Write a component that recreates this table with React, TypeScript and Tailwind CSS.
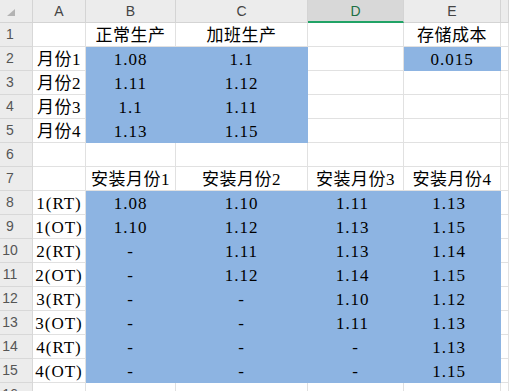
import React from "react";

const COLS = ["A", "B", "C", "D", "E", ""];
const BLUE = "bg-[#8db4e2] border-[#8db4e2]";

type Cell = { v?: string; blue?: boolean; num?: boolean; shift?: boolean };

const rows: Cell[][] = [
  [{}, { v: "正常生产" }, { v: "加班生产" }, {}, { v: "存储成本" }],
  [{ v: "月份1" }, { v: "1.08", blue: true, num: true }, { v: "1.1", blue: true, num: true }, {}, { v: "0.015", blue: true, num: true }],
  [{ v: "月份2" }, { v: "1.11", blue: true, num: true }, { v: "1.12", blue: true, num: true }, {}, {}],
  [{ v: "月份3" }, { v: "1.1", blue: true, num: true }, { v: "1.11", blue: true, num: true }, {}, {}],
  [{ v: "月份4" }, { v: "1.13", blue: true, num: true }, { v: "1.15", blue: true, num: true }, {}, {}],
  [{}, {}, {}, {}, {}],
  [{}, { v: "安装月份1" }, { v: "安装月份2" }, { v: "安装月份3" }, { v: "安装月份4" }],
];

// install rows: label + B..E values
const install: [string, string[]][] = [
  ["1(RT)", ["1.08", "1.10", "1.11", "1.13"]],
  ["1(OT)", ["1.10", "1.12", "1.13", "1.15"]],
  ["2(RT)", ["-", "1.11", "1.13", "1.14"]],
  ["2(OT)", ["-", "1.12", "1.14", "1.15"]],
  ["3(RT)", ["-", "-", "1.10", "1.12"]],
  ["3(OT)", ["-", "-", "1.11", "1.13"]],
  ["4(RT)", ["-", "-", "-", "1.13"]],
  ["4(OT)", ["-", "-", "-", "1.15"]],
];

for (const [label, vals] of install) {
  rows.push([
    { v: label, num: true },
    ...vals.map((v, i) => ({ v, blue: true, num: true, shift: i >= 2 && v !== "-" })),
  ]);
}
rows.push([{}, {}, {}, {}, {}]);

function Corner() {
  return (
    <svg width="8" height="7" viewBox="0 0 8 7" className="absolute left-[7px] top-[9px]">
      <polygon points="8,0 8,7 0,7" fill="#b3b3b3" />
    </svg>
  );
}

const sans = { fontFamily: '"Liberation Sans", "Noto Sans", sans-serif' };

export default function App() {
  return (
    <div
      className="h-[391px] w-[509px] overflow-hidden bg-white"
      style={{ fontFamily: '"Liberation Serif", "Noto Sans CJK SC", serif' }}
    >
      <div className="grid grid-cols-[33px_53px_90px_132px_96px_97px_1fr] grid-rows-[23px_repeat(16,24px)]">
        {/* header row */}
        <div className="relative border-b border-r border-[#d4d4d4] bg-[#ececec]">
          <Corner />
        </div>
        {COLS.map((c) =>
          c === "D" ? (
            <div
              key="D"
              className="flex items-center justify-center border-b-2 border-r border-b-[#21a366] border-r-[#d4d4d4] bg-[#d8d8d8] pt-[1px] text-[14px] text-[#1d7044]"
              style={sans}
            >
              D
            </div>
          ) : (
            <div
              key={c || "F"}
              className="flex items-center justify-center border-b border-r border-[#d4d4d4] bg-[#ececec] text-[14px] text-[#444]"
              style={sans}
            >
              {c}
            </div>
          )
        )}

        {rows.map((row, ri) => (
          <React.Fragment key={ri}>
            <div
              className="flex items-center border-b border-r border-[#d8d8d8] bg-[#ececec] text-[14px] text-[#555]"
              style={sans}
            >
              <span className="w-[20px] text-center">{ri + 1}</span>
            </div>
            {row.map((cell, ci) => (
              <div
                key={ci}
                className={`flex items-end justify-center whitespace-nowrap border-b border-r text-[17px] leading-[20px] text-black ${
                  cell.blue ? BLUE : "border-[#e1e1e1]"
                } ${cell.num ? "tracking-[1px]" : "tracking-[0.5px]"} ${cell.shift ? "pr-[6px]" : ""}`}
              >
                {cell.v ?? ""}
              </div>
            ))}
            <div className="border-b border-r border-[#e1e1e1]" />
          </React.Fragment>
        ))}
      </div>
    </div>
  );
}
